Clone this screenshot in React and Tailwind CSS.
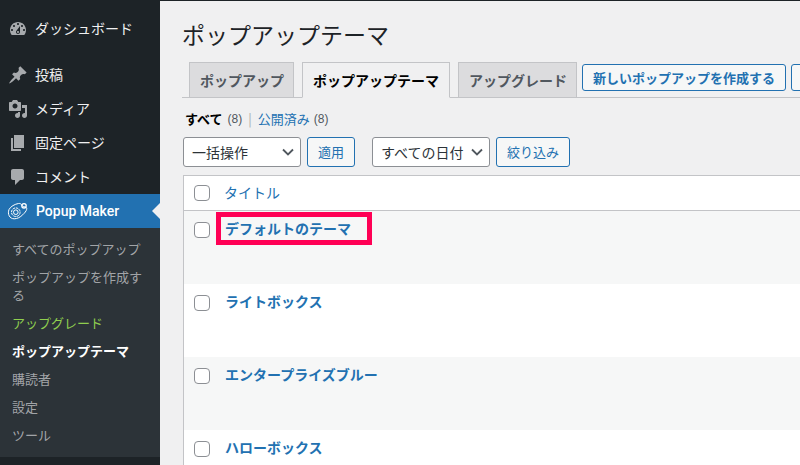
const menuIcons = {
  dashboard:
    "M3.76 16h12.48c1.1-1.37 1.76-3.11 1.76-5 0-4.42-3.58-8-8-8s-8 3.58-8 8c0 1.89.66 3.63 1.76 5zM10 4c.55 0 1 .45 1 1s-.45 1-1 1-1-.45-1-1 .45-1 1-1zM6 6c.55 0 1 .45 1 1s-.45 1-1 1-1-.45-1-1 .45-1 1-1zm8 0c.55 0 1 .45 1 1s-.45 1-1 1-1-.45-1-1 .45-1 1-1zm-5.37 5.55L12 7v6c0 1.1-.9 2-2 2s-2-.9-2-2c0-.57.24-1.08.63-1.45zM4 10c.55 0 1 .45 1 1s-.45 1-1 1-1-.45-1-1 .45-1 1-1zm12 0c.55 0 1 .45 1 1s-.45 1-1 1-1-.45-1-1 .45-1 1-1zm-5 3c0-.55-.45-1-1-1s-1 .45-1 1 .45 1 1 1 1-.45 1-1z",
  pin: "M10.44 3.02l1.82-1.82 6.36 6.35-1.83 1.82c-1.05-.68-2.48-.57-3.41.36l-.75.75c-.92.93-1.04 2.35-.35 3.41l-1.83 1.82-2.41-2.41-2.8 2.79c-.42.42-3.38 2.71-3.8 2.29s1.86-3.39 2.28-3.81l2.79-2.79L4.1 9.36l1.83-1.82c1.05.69 2.48.57 3.4-.36l.75-.75c.93-.92 1.05-2.35.36-3.41z",
  media:
    "M13 11V4c0-.55-.45-1-1-1h-1.67L9 1H5L3.67 3H2c-.55 0-1 .45-1 1v7c0 .55.45 1 1 1h10c.55 0 1-.45 1-1zM7 4.5c1.38 0 2.5 1.12 2.5 2.5S8.38 9.5 7 9.5 4.5 8.38 4.5 7 5.62 4.5 7 4.5zM14 6h5v10.5c0 1.38-1.12 2.5-2.5 2.5S14 17.88 14 16.5s1.12-2.5 2.5-2.5c.17 0 .34.02.5.05V9h-3V6zm-4 8.05V13h2v3.5c0 1.38-1.12 2.5-2.5 2.5S7 17.88 7 16.5 8.12 14 9.5 14c.17 0 .34.02.5.05z",
  page: "M6 15V2h10v13H6zm-1 1h8v2H3V5h2v11z",
  comment: "M5 2h9c1.1 0 2 .9 2 2v7c0 1.1-.9 2-2 2h-2l-5 5v-5H5c-1.1 0-2-.9-2-2V4c0-1.1.9-2 2-2z",
};

function MenuIcon({ d }) {
  return (
    <svg viewBox="0 0 20 20" className="h-5 w-5 fill-[#a7aaad]">
      <path d={d} fillRule="evenodd" />
    </svg>
  );
}

function MenuItem({ icon, label }) {
  return (
    <div className="flex h-[34px] items-center text-[14px] text-[#f0f0f1]">
      <div className="flex w-[35px] justify-center">
        <MenuIcon d={menuIcons[icon]} />
      </div>
      <span className="-mt-[2px]">{label}</span>
    </div>
  );
}

function PopupMakerIcon() {
  return (
    <svg viewBox="0 0 22 18" className="h-[18px] w-[22px] fill-none stroke-white" strokeWidth="1">
      <path d="M2 7.500C3.500 4.500 8 2 11.500 1.500c2-.3 2.700.6 3.200 1.500.5 1.200 1.700 1.600 3 1.700 1.500.3 2.300 1.200 2 2.600-.4 1.800-2.200 3.800-4 5.500-2.500 2.500-5.500 4-8.500 4C2.500 16.800.3 12 2 7.500z" />
      <circle cx="8.800" cy="10.200" r="4.300" strokeDasharray="2.500 .8" />
      <circle cx="8.800" cy="10.200" r="2.300" />
      <circle cx="17" cy="3.800" r="2.200" strokeWidth="1.300" />
    </svg>
  );
}

function Sidebar() {
  const sub = [
    { label: "すべてのポップアップ" },
    { label: "ポップアップを作成する" },
    { label: "アップグレード", cls: "text-[#8fce4f]" },
    { label: "ポップアップテーマ", cls: "font-bold text-white" },
    { label: "購読者" },
    { label: "設定" },
    { label: "ツール" },
  ];
  return (
    <aside className="flex h-[465px] w-[160px] shrink-0 flex-col bg-[#1d2327]">
      <div className="h-[12px]" />
      <MenuItem icon="dashboard" label="ダッシュボード" />
      <div className="h-[12px]" />
      <MenuItem icon="pin" label="投稿" />
      <MenuItem icon="media" label="メディア" />
      <MenuItem icon="page" label="固定ページ" />
      <MenuItem icon="comment" label="コメント" />
      <div className="relative flex h-[34px] items-center bg-[#2271b1] text-[14px] text-white">
        <div className="flex w-[36px] justify-center">
          <PopupMakerIcon />
        </div>
        <span className="font-['Roboto',sans-serif] font-medium">Popup Maker</span>
        <div className="absolute right-0 top-[9px] border-y-[8px] border-r-[8px] border-y-transparent border-r-[#f0f0f1]" />
      </div>
      <div className="flex h-[229px] flex-col bg-[#2c3338] py-[7px] text-[13px] leading-[18px] text-[#c3c4c7]/80">
        {sub.map((s) => (
          <div key={s.label} className={`py-[5px] pl-[12px] pr-[12px] ${s.cls || ""}`}>
            {s.label}
          </div>
        ))}
      </div>
    </aside>
  );
}

function Tab({ active, className = "", children }) {
  return (
    <div
      className={`-mb-px flex h-[36px] shrink-0 items-center whitespace-nowrap border border-[#c3c4c7] pl-[10px] text-[14px] font-bold ${
        active ? "border-b-[#f0f0f1] bg-[#f0f0f1] text-black" : "bg-[#dcdcde] text-[#50575e]"
      } ${className}`}
    >
      {children}
    </div>
  );
}

function Btn({ children, className = "" }) {
  return (
    <div
      className={`flex shrink-0 items-center justify-center whitespace-nowrap rounded-[3px] border border-[#2271b1] bg-[#f6f7f7] text-[13px] text-[#2271b1] ${className}`}
    >
      {children}
    </div>
  );
}

function Select({ label, className = "" }) {
  return (
    <div
      className={`flex h-[30px] items-center justify-between rounded-[3px] border border-[#8c8f94] bg-white text-[14px] text-[#2c3338] ${className}`}
    >
      <span>{label}</span>
      <svg viewBox="0 0 12 8" className="h-2 w-3 fill-none stroke-[#50575e]" strokeWidth="1.8">
        <path d="M1 1.500l5 5 5-5" />
      </svg>
    </div>
  );
}

function Checkbox() {
  return <div className="h-4 w-4 shrink-0 rounded-[4px] border border-[#8c8f94] bg-white" />;
}

function ThemeRow({ title, alt }) {
  return (
    <div className={`flex h-[73px] items-start pl-[10px] pt-[11px] ${alt ? "bg-[#f6f7f7]" : "bg-white"}`}>
      <Checkbox />
      <a className="ml-[15px] mt-[-4px] text-[14px] font-semibold leading-[20px] text-[#2271b1]">{title}</a>
    </div>
  );
}

export default function App() {
  return (
    <div className="flex h-[465px] w-[800px] overflow-hidden bg-[#f0f0f1] font-['Noto_Sans_CJK_JP','Liberation_Sans',sans-serif]">
      <Sidebar />
      <main className="relative min-w-0 flex-1 border-t border-[#1d2327] pl-[22px]">
        <h1 className="mt-[16px] h-[34px] text-[23px] leading-[34px] text-[#1d2327]">ポップアップテーマ</h1>
        <div className="mt-[11px] flex h-[36px] items-end border-b border-[#c3c4c7] pl-[7px]">
          <Tab className="w-[105px]">ポップアップ</Tab>
          <div className="ml-[8px]">
            <Tab active className="w-[148px]">
              ポップアップテーマ
            </Tab>
          </div>
          <div className="ml-[8px]">
            <Tab className="w-[119px]">アップグレード</Tab>
          </div>
          <Btn className="mb-[6px] ml-[5px] h-[27px] w-[204px] font-semibold">新しいポップアップを作成する</Btn>
          <Btn className="mb-[6px] ml-[5px] h-[27px] w-[40px]" />
        </div>
        <div className="mt-[11px] flex h-[20px] items-center pl-[3px] text-[13px] text-[#50575e]">
          <span className="font-semibold text-black">すべて</span>
          <span className="ml-[5px] font-['Liberation_Sans',sans-serif] text-[12px]">(8)</span>
          <span className="mx-[6px] text-[#a7aaad]">|</span>
          <span className="text-[#2271b1]">公開済み</span>
          <span className="ml-[4px] font-['Liberation_Sans',sans-serif] text-[12px]">(8)</span>
        </div>
        <div className="mt-[8px] flex items-center pl-[1px]">
          <Select label="一括操作" className="w-[118px] pl-[8px] pr-[6px]" />
          <Btn className="ml-[6px] h-[30px] w-[48px]">適用</Btn>
          <Select label="すべての日付" className="ml-[17px] w-[118px] pl-[8px] pr-[6px]" />
          <Btn className="ml-[6px] h-[30px] w-[74px]">絞り込み</Btn>
        </div>
        <div className="ml-[1px] mt-[8px] border border-r-0 border-[#c3c4c7] bg-white">
          <div className="flex h-[35px] items-center border-b border-[#c3c4c7] pl-[10px]">
            <Checkbox />
            <span className="-mt-[2px] ml-[14px] text-[14px] text-[#2271b1]">タイトル</span>
          </div>
          <ThemeRow title="デフォルトのテーマ" alt />
          <ThemeRow title="ライトボックス" />
          <ThemeRow title="エンタープライズブルー" alt />
          <ThemeRow title="ハローボックス" />
        </div>
        <div className="absolute left-[56px] top-[211px] h-[33px] w-[156px] border-[5px] border-[#ff0055]" />
      </main>
    </div>
  );
}
